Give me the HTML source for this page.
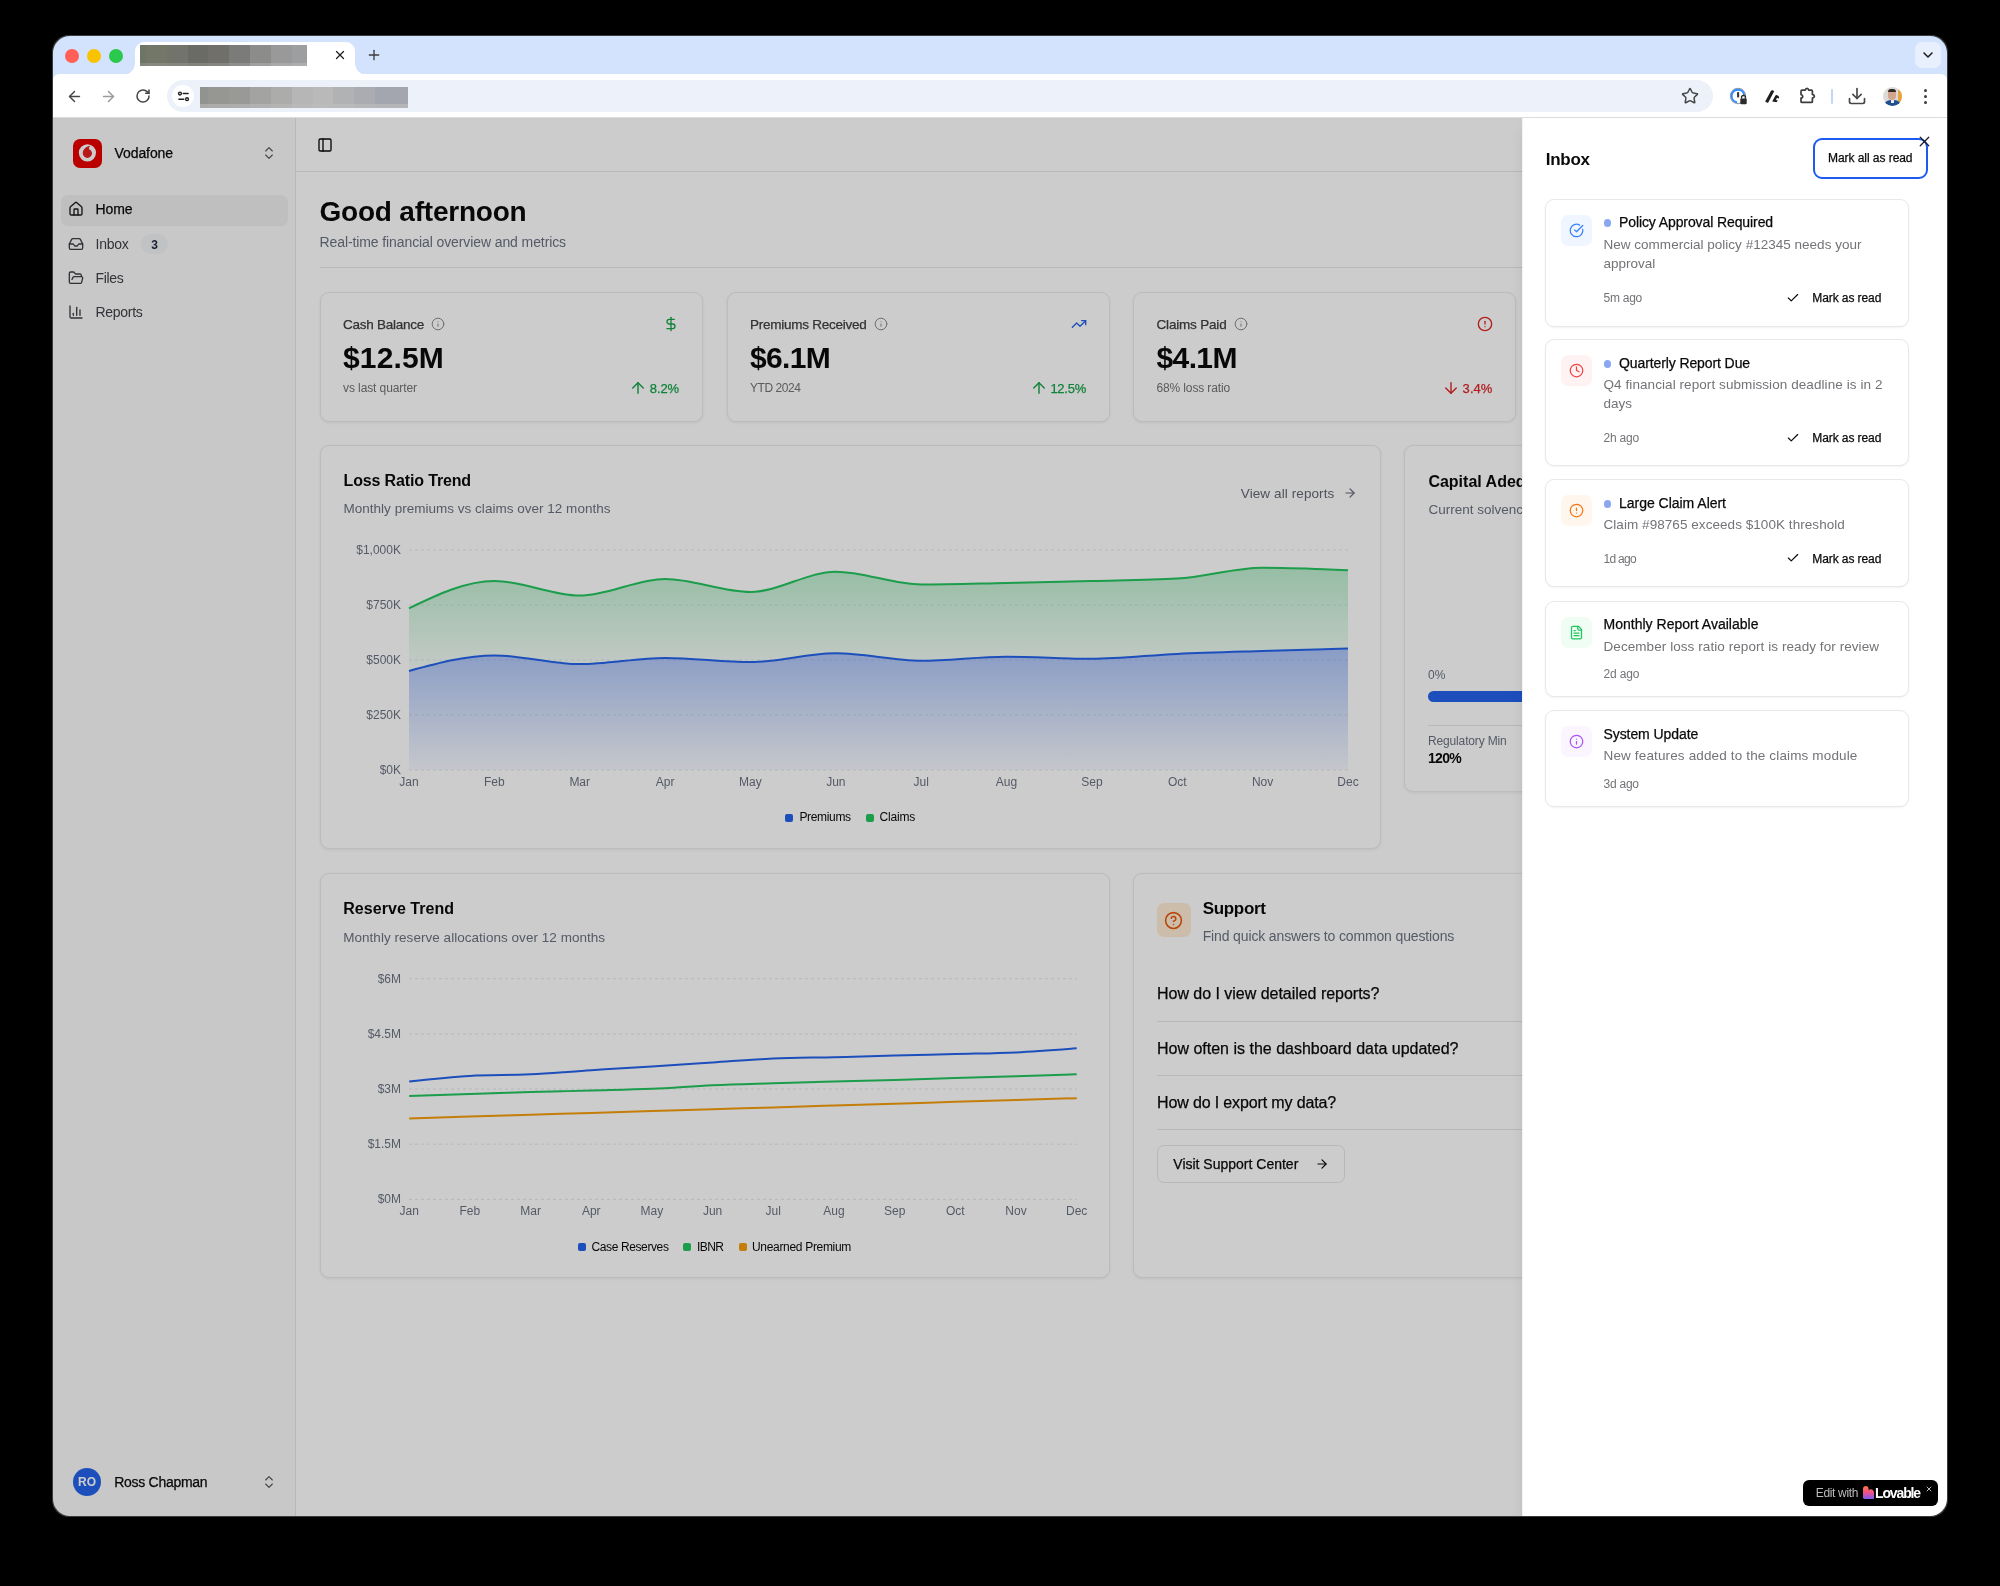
<!DOCTYPE html>
<html><head><meta charset="utf-8"><style>
html,body{margin:0;padding:0;background:#000;width:2000px;height:1586px;overflow:hidden;font-family:"Liberation Sans", sans-serif;}
.win{will-change:transform;}
</style></head><body>
<div style="position:absolute;left:52px;top:35px;width:1896px;height:1482px;border-radius:17px;background:#3a3a3a"></div>
<div class="win" style="position:absolute;left:0;top:0;width:2000px;height:1586px;overflow:hidden;clip-path:inset(36px 53px 70px 53px round 17px);background:#fff">
<div style="position:absolute;left:53px;top:36px;width:1894px;height:38px;background:#d3e3fd;border-radius:0px;"></div><svg style="position:absolute;left:123px;top:41.5px" width="245" height="33" viewBox="0 0 245 33"><path d="M0 33 A 12 12 0 0 0 12 21 L 12 9 A 9 9 0 0 1 21 0 L 223 0 A 9 9 0 0 1 232 9 L 232 21 A 12 12 0 0 0 244 33 Z" fill="#fff"/></svg><div style="position:absolute;left:139.50px;top:45.3px;width:6.18px;height:17.5px;background:#6c7566"></div><div style="position:absolute;left:139.50px;top:62.8px;width:6.18px;height:2.8px;background:#82857c"></div><div style="position:absolute;left:145.68px;top:45.3px;width:21.38px;height:17.5px;background:#737767"></div><div style="position:absolute;left:145.68px;top:62.8px;width:21.38px;height:2.8px;background:#878880"></div><div style="position:absolute;left:167.05px;top:45.3px;width:20.90px;height:17.5px;background:#72736a"></div><div style="position:absolute;left:167.05px;top:62.8px;width:20.90px;height:2.8px;background:#85867f"></div><div style="position:absolute;left:187.95px;top:45.3px;width:19.95px;height:17.5px;background:#6a6b64"></div><div style="position:absolute;left:187.95px;top:62.8px;width:19.95px;height:2.8px;background:#83837d"></div><div style="position:absolute;left:207.90px;top:45.3px;width:20.90px;height:17.5px;background:#706f69"></div><div style="position:absolute;left:207.90px;top:62.8px;width:20.90px;height:2.8px;background:#868581"></div><div style="position:absolute;left:228.80px;top:45.3px;width:21.09px;height:17.5px;background:#7b7b79"></div><div style="position:absolute;left:228.80px;top:62.8px;width:21.09px;height:2.8px;background:#8e8e8c"></div><div style="position:absolute;left:249.89px;top:45.3px;width:21.19px;height:17.5px;background:#8c8c8b"></div><div style="position:absolute;left:249.89px;top:62.8px;width:21.19px;height:2.8px;background:#a0a09f"></div><div style="position:absolute;left:271.07px;top:45.3px;width:20.90px;height:17.5px;background:#989998"></div><div style="position:absolute;left:271.07px;top:62.8px;width:20.90px;height:2.8px;background:#a9a9a8"></div><div style="position:absolute;left:291.98px;top:45.3px;width:15.20px;height:17.5px;background:#9d9e9f"></div><div style="position:absolute;left:291.98px;top:62.8px;width:15.20px;height:2.8px;background:#adaeaf"></div><svg style="position:absolute;left:332.5px;top:48.0px;" width="14" height="14" viewBox="0 0 24 24" fill="none" stroke="#1f1f1f" stroke-width="2.2" stroke-linecap="round" stroke-linejoin="round"><path d="M18 6 6 18"/><path d="m6 6 12 12"/></svg><svg style="position:absolute;left:366.0px;top:47.0px;" width="16" height="16" viewBox="0 0 24 24" fill="none" stroke="#3c3c3c" stroke-width="2" stroke-linecap="round" stroke-linejoin="round"><path d="M5 12h14"/><path d="M12 5v14"/></svg><div style="position:absolute;left:65px;top:48.5px;width:14px;height:14px;background:#ff5f57;border-radius:7px;"></div><div style="position:absolute;left:87px;top:48.5px;width:14px;height:14px;background:#f9c300;border-radius:7px;"></div><div style="position:absolute;left:109px;top:48.5px;width:14px;height:14px;background:#2ac84c;border-radius:7px;"></div><div style="position:absolute;left:1915px;top:42px;width:26px;height:26px;background:#e8f0fe;border-radius:7px;"></div><svg style="position:absolute;left:1919.5px;top:47.0px;" width="16" height="16" viewBox="0 0 24 24" fill="none" stroke="#1f1f1f" stroke-width="2.4" stroke-linecap="round" stroke-linejoin="round"><path d="m6 9 6 6 6-6"/></svg><div style="position:absolute;left:53px;top:74px;width:1894px;height:10px;background:#d3e3fd;border-radius:0px;"></div><div style="position:absolute;left:53px;top:74px;width:1894px;height:44px;background:#fff;border-radius:6px 6px 0 0"></div><div style="position:absolute;left:53px;top:117px;width:1894px;height:1px;background:#dadce0;border-radius:0px;"></div><svg style="position:absolute;left:65.8px;top:87.5px;" width="17" height="17" viewBox="0 0 24 24" fill="none" stroke="#474747" stroke-width="2.1" stroke-linecap="round" stroke-linejoin="round"><path d="m12 19-7-7 7-7"/><path d="M19 12H5"/></svg><svg style="position:absolute;left:99.7px;top:87.5px;" width="17" height="17" viewBox="0 0 24 24" fill="none" stroke="#9a9a9a" stroke-width="2.1" stroke-linecap="round" stroke-linejoin="round"><path d="M5 12h14"/><path d="m12 5 7 7-7 7"/></svg><svg style="position:absolute;left:134.5px;top:88.3px;" width="16" height="16" viewBox="0 0 24 24" fill="none" stroke="#474747" stroke-width="2.3" stroke-linecap="round" stroke-linejoin="round"><path d="M21 12a9 9 0 1 1-9-9c2.52 0 4.93 1 6.74 2.74L21 8"/><path d="M21 3v5h-5"/></svg><div style="position:absolute;left:167px;top:80px;width:1546px;height:32px;background:#edf2fa;border-radius:16px;"></div><div style="position:absolute;left:172px;top:85px;width:22px;height:22px;background:#fff;border-radius:11px;"></div><svg style="position:absolute;left:176.5px;top:89.5px;" width="13" height="13" viewBox="0 0 24 24" fill="none" stroke="#1f1f1f" stroke-width="2.6" stroke-linecap="round" stroke-linejoin="round"><circle cx="5.5" cy="6.5" r="2.6"/><path d="M11.5 6.5h9"/><circle cx="18.5" cy="17" r="2.6"/><path d="M3.5 17h9"/></svg><div style="position:absolute;left:200px;top:87px;width:8px;height:17px;background:#929290"></div><div style="position:absolute;left:200px;top:104px;width:8px;height:4px;background:#a9a9a7"></div><div style="position:absolute;left:208px;top:87px;width:21px;height:17px;background:#969693"></div><div style="position:absolute;left:208px;top:104px;width:21px;height:4px;background:#acacaa"></div><div style="position:absolute;left:229px;top:87px;width:21px;height:17px;background:#999997"></div><div style="position:absolute;left:229px;top:104px;width:21px;height:4px;background:#adadab"></div><div style="position:absolute;left:250px;top:87px;width:21px;height:17px;background:#a3a3a2"></div><div style="position:absolute;left:250px;top:104px;width:21px;height:4px;background:#b0b1b0"></div><div style="position:absolute;left:271px;top:87px;width:21px;height:17px;background:#acacab"></div><div style="position:absolute;left:271px;top:104px;width:21px;height:4px;background:#b4b4b3"></div><div style="position:absolute;left:292px;top:87px;width:21px;height:17px;background:#b6b6b7"></div><div style="position:absolute;left:292px;top:104px;width:21px;height:4px;background:#b9b9b9"></div><div style="position:absolute;left:313px;top:87px;width:20px;height:17px;background:#b9b9b9"></div><div style="position:absolute;left:313px;top:104px;width:20px;height:4px;background:#bbbbbb"></div><div style="position:absolute;left:333px;top:87px;width:21px;height:17px;background:#b0b2b4"></div><div style="position:absolute;left:333px;top:104px;width:21px;height:4px;background:#b9babb"></div><div style="position:absolute;left:354px;top:87px;width:21px;height:17px;background:#aaacb1"></div><div style="position:absolute;left:354px;top:104px;width:21px;height:4px;background:#b6b7b9"></div><div style="position:absolute;left:375px;top:87px;width:33px;height:17px;background:#a3a6ae"></div><div style="position:absolute;left:375px;top:104px;width:33px;height:4px;background:#b3b5b8"></div><svg style="position:absolute;left:1681.0px;top:87.0px;" width="18" height="18" viewBox="0 0 24 24" fill="none" stroke="#474747" stroke-width="2" stroke-linecap="round" stroke-linejoin="round"><path d="M11.525 2.295a.53.53 0 0 1 .95 0l2.31 4.679a2.123 2.123 0 0 0 1.595 1.16l5.166.756a.53.53 0 0 1 .294.904l-3.736 3.638a2.123 2.123 0 0 0-.611 1.878l.882 5.14a.53.53 0 0 1-.771.56l-4.618-2.428a2.122 2.122 0 0 0-1.973 0L6.396 21.01a.53.53 0 0 1-.77-.56l.881-5.139a2.122 2.122 0 0 0-.611-1.879L2.16 9.795a.53.53 0 0 1 .294-.906l5.165-.755a2.122 2.122 0 0 0 1.597-1.16z"/></svg><svg style="position:absolute;left:1728px;top:86px" width="20" height="20" viewBox="0 0 20 20"><circle cx="10" cy="10" r="7.6" fill="none" stroke="#9aa0a6" stroke-width="1.2"/><path d="M9 16.2 A6.3 6.3 0 1 1 16.2 9" fill="none" stroke="#2f8cff" stroke-width="2"/><rect x="9" y="6" width="2.2" height="5.5" rx="0.8" fill="#3c3c3c"/><rect x="12.3" y="12.6" width="6.4" height="5.6" rx="1" fill="#2b2b2b"/><path d="M13.5 12.8 v-1.3 a2 2 0 0 1 4 0 V12.8" fill="none" stroke="#2b2b2b" stroke-width="1.3"/></svg><svg style="position:absolute;left:1763px;top:87px" width="20" height="18" viewBox="0 0 20 18"><path d="M2.2 14.6 L7.6 4.4 Q8.6 2.8 10.2 3.6 L11.2 4.2 L5.4 15.2 Q4.8 16 3.8 15.6 Z" fill="#1f1f1f"/><path d="M9.2 14.6 L12.4 8.6 Q13.2 7.6 14.3 8.3 L15.6 9.2 Q16.6 10 15.9 11.2 L14.2 14.4 Q13.6 15.4 12.4 15.1 Z" fill="#1f1f1f"/><circle cx="14.6" cy="12.2" r="1.3" fill="#fff"/></svg><svg style="position:absolute;left:1797px;top:86px" width="20" height="20" viewBox="0 0 20 20"><path d="M4 5.2 Q4 4.2 5 4.2 H8.3 Q8.6 2.4 10 2.4 Q11.4 2.4 11.7 4.2 H14.4 Q15.4 4.2 15.4 5.2 V8.4 Q17.4 8.8 17.4 10.2 Q17.4 11.6 15.4 12 V15.4 Q15.4 16.4 14.4 16.4 H5 Q4 16.4 4 15.4 V12.2 Q5.8 11.8 5.8 10.4 Q5.8 9 4 8.6 Z" fill="none" stroke="#3c3c3c" stroke-width="1.7" stroke-linejoin="round"/></svg><div style="position:absolute;left:1831px;top:89px;width:2px;height:15px;background:#c2d7f7;border-radius:1px;"></div><svg style="position:absolute;left:1847.0px;top:86.0px;" width="20" height="20" viewBox="0 0 24 24" fill="none" stroke="#474747" stroke-width="2" stroke-linecap="round" stroke-linejoin="round"><path d="M21 15v4a2 2 0 0 1-2 2H5a2 2 0 0 1-2-2v-4"/><path d="M7 10l5 5 5-5"/><path d="M12 15V3"/></svg><div style="position:absolute;left:1882.5px;top:86.5px;width:19px;height:19px;border-radius:10px;overflow:hidden;background:#dcdad6"><div style="position:absolute;left:15px;top:3px;width:5px;height:12px;background:#e8a33c"></div><div style="position:absolute;left:5.5px;top:3px;width:8px;height:10px;border-radius:4px 4px 5px 5px;background:#d2a58c"></div><div style="position:absolute;left:5.5px;top:2px;width:8px;height:3.5px;border-radius:3px 3px 0 0;background:#2f2a26"></div><div style="position:absolute;left:0px;top:13px;width:19px;height:8px;border-radius:8px 8px 0 0;background:#1f4f8f"></div><div style="position:absolute;left:8px;top:13px;width:3px;height:3px;background:#e9eef5"></div></div><div style="position:absolute;left:1924.3px;top:88.5px;width:3px;height:3px;background:#3c3c3c;border-radius:1.5px;"></div><div style="position:absolute;left:1924.3px;top:94.5px;width:3px;height:3px;background:#3c3c3c;border-radius:1.5px;"></div><div style="position:absolute;left:1924.3px;top:100.5px;width:3px;height:3px;background:#3c3c3c;border-radius:1.5px;"></div><div style="position:absolute;left:53px;top:118px;width:1894px;height:1398px;background:#ffffff;border-radius:0px;"></div><div style="position:absolute;left:53px;top:118px;width:243px;height:1398px;background:#fafafa;border-radius:0px;"></div><div style="position:absolute;left:295px;top:118px;width:1px;height:1398px;background:#e5e7eb;border-radius:0px;"></div><div style="position:absolute;left:73px;top:138.5px;width:29px;height:29px;background:#ea0000;border-radius:7px;"></div><svg style="position:absolute;left:73px;top:139px" width="29" height="28" viewBox="0 0 29 28"><circle cx="14.4" cy="13.8" r="8.6" fill="#fff"/><path d="M17.3 6.8 C14.2 7.2 9.8 9.6 9.8 14.3 C9.8 16.8 11.9 18.9 14.4 18.9 C16.9 18.9 19 16.8 19 14.3 C19 12.2 17.6 10.6 15.9 10.2 C15.9 8.8 16.4 7.6 17.3 6.8 Z" fill="#e61e1e"/></svg><div style="position:absolute;left:114.50px;top:146.10px;font-size:14px;line-height:14px;font-weight:400;color:#0a0a0a;letter-spacing:-0.084px;white-space:pre;-webkit-text-stroke:0.25px #0a0a0a;">Vodafone</div><svg style="position:absolute;left:260.5px;top:144.5px;" width="16" height="16" viewBox="0 0 24 24" fill="none" stroke="#525252" stroke-width="1.6" stroke-linecap="round" stroke-linejoin="round"><path d="m7 15 5 5 5-5"/><path d="m7 9 5-5 5 5"/></svg><div style="position:absolute;left:61px;top:195px;width:227px;height:31px;background:#efefef;border-radius:7px;"></div><svg style="position:absolute;left:68.0px;top:201.1px;" width="16" height="16" viewBox="0 0 24 24" fill="none" stroke="#1a1a1a" stroke-width="2" stroke-linecap="round" stroke-linejoin="round"><path d="M15 21v-8a1 1 0 0 0-1-1h-4a1 1 0 0 0-1 1v8"/><path d="M3 10a2 2 0 0 1 .709-1.528l7-5.999a2 2 0 0 1 2.582 0l7 5.999A2 2 0 0 1 21 10v9a2 2 0 0 1-2 2H5a2 2 0 0 1-2-2z"/></svg><div style="position:absolute;left:95.50px;top:202.40px;font-size:14px;line-height:14px;font-weight:400;color:#0a0a0a;letter-spacing:-0.090px;white-space:pre;-webkit-text-stroke:0.25px #0a0a0a;">Home</div><svg style="position:absolute;left:68.0px;top:235.6px;" width="16" height="16" viewBox="0 0 24 24" fill="none" stroke="#3f3f46" stroke-width="2" stroke-linecap="round" stroke-linejoin="round"><polyline points="22 12 16 12 14 15 10 15 8 12 2 12"/><path d="M5.45 5.11 2 12v6a2 2 0 0 0 2 2h16a2 2 0 0 0 2-2v-6l-3.45-6.89A2 2 0 0 0 16.76 4H7.24a2 2 0 0 0-1.79 1.11z"/></svg><div style="position:absolute;left:95.50px;top:236.90px;font-size:14px;line-height:14px;font-weight:400;color:#3f3f46;letter-spacing:-0.250px;white-space:pre;">Inbox</div><svg style="position:absolute;left:68.0px;top:269.6px;" width="16" height="16" viewBox="0 0 24 24" fill="none" stroke="#3f3f46" stroke-width="2" stroke-linecap="round" stroke-linejoin="round"><path d="m6 14 1.5-2.9A2 2 0 0 1 9.24 10H20a2 2 0 0 1 1.94 2.5l-1.54 6a2 2 0 0 1-1.95 1.5H4a2 2 0 0 1-2-2V5a2 2 0 0 1 2-2h3.9a2 2 0 0 1 1.69.9l.81 1.2a2 2 0 0 0 1.67.9H18a2 2 0 0 1 2 2v2"/></svg><div style="position:absolute;left:95.50px;top:270.90px;font-size:14px;line-height:14px;font-weight:400;color:#3f3f46;letter-spacing:-0.312px;white-space:pre;">Files</div><svg style="position:absolute;left:68.0px;top:303.6px;" width="16" height="16" viewBox="0 0 24 24" fill="none" stroke="#3f3f46" stroke-width="2" stroke-linecap="round" stroke-linejoin="round"><path d="M3 3v16a2 2 0 0 0 2 2h16"/><path d="M18 17V9"/><path d="M13 17V5"/><path d="M8 17v-3"/></svg><div style="position:absolute;left:95.50px;top:304.90px;font-size:14px;line-height:14px;font-weight:400;color:#3f3f46;letter-spacing:-0.290px;white-space:pre;">Reports</div><div style="position:absolute;left:141px;top:234px;width:27px;height:20px;background:#f1f3f6;border-radius:10px;"></div><div style="position:absolute;left:151.16px;top:238.80px;font-size:12px;line-height:12px;font-weight:700;color:#1e293b;letter-spacing:0.000px;white-space:pre;">3</div><div style="position:absolute;left:73px;top:1467.5px;width:28px;height:28px;background:#2563eb;border-radius:14px;"></div><div style="position:absolute;left:78.00px;top:1475.80px;font-size:12px;line-height:12px;font-weight:700;color:#fff;letter-spacing:0.000px;white-space:pre;">RO</div><div style="position:absolute;left:114.25px;top:1474.60px;font-size:14px;line-height:14px;font-weight:400;color:#0a0a0a;letter-spacing:-0.292px;white-space:pre;-webkit-text-stroke:0.25px #0a0a0a;">Ross Chapman</div><svg style="position:absolute;left:260.5px;top:1473.5px;" width="16" height="16" viewBox="0 0 24 24" fill="none" stroke="#525252" stroke-width="1.6" stroke-linecap="round" stroke-linejoin="round"><path d="m7 15 5 5 5-5"/><path d="m7 9 5-5 5 5"/></svg><div style="position:absolute;left:296px;top:171px;width:1651px;height:1px;background:#e5e7eb;border-radius:0px;"></div><svg style="position:absolute;left:316.5px;top:136.5px;" width="16" height="16" viewBox="0 0 24 24" fill="none" stroke="#0a0a0a" stroke-width="2" stroke-linecap="round" stroke-linejoin="round"><rect width="18" height="18" x="3" y="3" rx="2"/><path d="M9 3v18"/></svg><div style="position:absolute;left:319.50px;top:198.20px;font-size:28px;line-height:28px;font-weight:700;color:#0a0a0a;letter-spacing:-0.213px;white-space:pre;">Good afternoon</div><div style="position:absolute;left:319.50px;top:234.80px;font-size:14px;line-height:14px;font-weight:400;color:#6b7280;letter-spacing:-0.101px;white-space:pre;">Real-time financial overview and metrics</div><div style="position:absolute;left:319.5px;top:267px;width:1603px;height:1px;background:#e5e7eb;border-radius:0px;"></div><div style="position:absolute;left:319.5px;top:291.5px;width:383px;height:130px;background:#fff;border-radius:9px;border:1px solid #ebebeb;box-sizing:border-box;box-shadow:0 1px 3px rgba(0,0,0,0.07);"></div><div style="position:absolute;left:343.00px;top:317.52px;font-size:13.5px;line-height:13.5px;font-weight:400;color:#404040;letter-spacing:-0.255px;white-space:pre;-webkit-text-stroke:0.25px #404040;">Cash Balance</div><svg style="position:absolute;left:431.3px;top:317.0px;" width="14" height="14" viewBox="0 0 24 24" fill="none" stroke="#8a8a8a" stroke-width="1.7" stroke-linecap="round" stroke-linejoin="round"><circle cx="12" cy="12" r="10"/><path d="M12 16v-4"/><path d="M12 8h.01"/></svg><div style="position:absolute;left:343.00px;top:342.50px;font-size:30px;line-height:30px;font-weight:700;color:#0a0a0a;letter-spacing:0.154px;white-space:pre;">$12.5M</div><div style="position:absolute;left:343.00px;top:382.30px;font-size:12px;line-height:12px;font-weight:400;color:#737373;letter-spacing:-0.092px;white-space:pre;">vs last quarter</div><div style="position:absolute;left:649.80px;top:381.95px;font-size:13px;line-height:13px;font-weight:400;color:#16a34a;letter-spacing:-0.110px;white-space:pre;-webkit-text-stroke:0.25px #16a34a;">8.2%</div><svg style="position:absolute;left:629.1999999999999px;top:379.3px;" width="18" height="18" viewBox="0 0 24 24" fill="none" stroke="#16a34a" stroke-width="1.9" stroke-linecap="round" stroke-linejoin="round"><path d="m5 12 7-7 7 7"/><path d="M12 19V5"/></svg><svg style="position:absolute;left:663.3px;top:316.0px;" width="16" height="16" viewBox="0 0 24 24" fill="none" stroke="#16a34a" stroke-width="2" stroke-linecap="round" stroke-linejoin="round"><line x1="12" x2="12" y1="2" y2="22"/><path d="M17 5H9.5a3.5 3.5 0 0 0 0 7h5a3.5 3.5 0 0 1 0 7H6"/></svg><div style="position:absolute;left:726.5px;top:291.5px;width:383px;height:130px;background:#fff;border-radius:9px;border:1px solid #ebebeb;box-sizing:border-box;box-shadow:0 1px 3px rgba(0,0,0,0.07);"></div><div style="position:absolute;left:750.00px;top:317.52px;font-size:13.5px;line-height:13.5px;font-weight:400;color:#404040;letter-spacing:-0.253px;white-space:pre;-webkit-text-stroke:0.25px #404040;">Premiums Received</div><svg style="position:absolute;left:873.6px;top:317.0px;" width="14" height="14" viewBox="0 0 24 24" fill="none" stroke="#8a8a8a" stroke-width="1.7" stroke-linecap="round" stroke-linejoin="round"><circle cx="12" cy="12" r="10"/><path d="M12 16v-4"/><path d="M12 8h.01"/></svg><div style="position:absolute;left:750.00px;top:342.50px;font-size:30px;line-height:30px;font-weight:700;color:#0a0a0a;letter-spacing:-0.678px;white-space:pre;">$6.1M</div><div style="position:absolute;left:750.00px;top:382.30px;font-size:12px;line-height:12px;font-weight:400;color:#737373;letter-spacing:-0.441px;white-space:pre;">YTD 2024</div><div style="position:absolute;left:1050.40px;top:381.95px;font-size:13px;line-height:13px;font-weight:400;color:#16a34a;letter-spacing:-0.255px;white-space:pre;-webkit-text-stroke:0.25px #16a34a;">12.5%</div><svg style="position:absolute;left:1029.8000000000002px;top:379.3px;" width="18" height="18" viewBox="0 0 24 24" fill="none" stroke="#16a34a" stroke-width="1.9" stroke-linecap="round" stroke-linejoin="round"><path d="m5 12 7-7 7 7"/><path d="M12 19V5"/></svg><svg style="position:absolute;left:1070.5px;top:316.0px;" width="16" height="16" viewBox="0 0 24 24" fill="none" stroke="#2563eb" stroke-width="2" stroke-linecap="round" stroke-linejoin="round"><polyline points="22 7 13.5 15.5 8.5 10.5 2 17"/><polyline points="16 7 22 7 22 13"/></svg><div style="position:absolute;left:1133px;top:291.5px;width:383px;height:130px;background:#fff;border-radius:9px;border:1px solid #ebebeb;box-sizing:border-box;box-shadow:0 1px 3px rgba(0,0,0,0.07);"></div><div style="position:absolute;left:1156.50px;top:317.52px;font-size:13.5px;line-height:13.5px;font-weight:400;color:#404040;letter-spacing:-0.185px;white-space:pre;-webkit-text-stroke:0.25px #404040;">Claims Paid</div><svg style="position:absolute;left:1233.8px;top:317.0px;" width="14" height="14" viewBox="0 0 24 24" fill="none" stroke="#8a8a8a" stroke-width="1.7" stroke-linecap="round" stroke-linejoin="round"><circle cx="12" cy="12" r="10"/><path d="M12 16v-4"/><path d="M12 8h.01"/></svg><div style="position:absolute;left:1156.50px;top:342.50px;font-size:30px;line-height:30px;font-weight:700;color:#0a0a0a;letter-spacing:-0.618px;white-space:pre;">$4.1M</div><div style="position:absolute;left:1156.50px;top:382.30px;font-size:12px;line-height:12px;font-weight:400;color:#737373;letter-spacing:-0.134px;white-space:pre;">68% loss ratio</div><div style="position:absolute;left:1462.60px;top:381.95px;font-size:13px;line-height:13px;font-weight:400;color:#dc2626;letter-spacing:0.065px;white-space:pre;-webkit-text-stroke:0.25px #dc2626;">3.4%</div><svg style="position:absolute;left:1442.0px;top:379.3px;" width="18" height="18" viewBox="0 0 24 24" fill="none" stroke="#dc2626" stroke-width="1.9" stroke-linecap="round" stroke-linejoin="round"><path d="M12 5v14"/><path d="m19 12-7 7-7-7"/></svg><svg style="position:absolute;left:1477.0px;top:316.0px;" width="16" height="16" viewBox="0 0 24 24" fill="none" stroke="#dc2626" stroke-width="2" stroke-linecap="round" stroke-linejoin="round"><circle cx="12" cy="12" r="10"/><line x1="12" x2="12" y1="8" y2="12"/><line x1="12" x2="12.01" y1="16" y2="16"/></svg><div style="position:absolute;left:1540px;top:291.5px;width:383px;height:130px;background:#fff;border-radius:9px;border:1px solid #ebebeb;box-sizing:border-box;box-shadow:0 1px 3px rgba(0,0,0,0.07);"></div><div style="position:absolute;left:1563.50px;top:317.52px;font-size:13.5px;line-height:13.5px;font-weight:400;color:#404040;letter-spacing:0.620px;white-space:pre;-webkit-text-stroke:0.25px #404040;">Loss Ratio</div><svg style="position:absolute;left:1633.0px;top:317.0px;" width="14" height="14" viewBox="0 0 24 24" fill="none" stroke="#8a8a8a" stroke-width="1.7" stroke-linecap="round" stroke-linejoin="round"><circle cx="12" cy="12" r="10"/><path d="M12 16v-4"/><path d="M12 8h.01"/></svg><div style="position:absolute;left:1563.50px;top:342.50px;font-size:30px;line-height:30px;font-weight:700;color:#0a0a0a;letter-spacing:0.984px;white-space:pre;">68.2%</div><div style="position:absolute;left:1563.50px;top:382.30px;font-size:12px;line-height:12px;font-weight:400;color:#737373;letter-spacing:0.541px;white-space:pre;">Target: 65%</div><div style="position:absolute;left:1870.50px;top:381.95px;font-size:13px;line-height:13px;font-weight:400;color:#dc2626;letter-spacing:-0.160px;white-space:pre;-webkit-text-stroke:0.25px #dc2626;">2.1%</div><svg style="position:absolute;left:1849.9px;top:379.3px;" width="18" height="18" viewBox="0 0 24 24" fill="none" stroke="#dc2626" stroke-width="1.9" stroke-linecap="round" stroke-linejoin="round"><path d="M12 5v14"/><path d="m19 12-7 7-7-7"/></svg><svg style="position:absolute;left:1884.0px;top:316.0px;" width="16" height="16" viewBox="0 0 24 24" fill="none" stroke="#dc2626" stroke-width="2" stroke-linecap="round" stroke-linejoin="round"><circle cx="12" cy="12" r="10"/><line x1="12" x2="12" y1="8" y2="12"/><line x1="12" x2="12.01" y1="16" y2="16"/></svg><div style="position:absolute;left:319.5px;top:445px;width:1061px;height:404px;background:#fff;border-radius:9px;border:1px solid #ebebeb;box-sizing:border-box;box-shadow:0 1px 3px rgba(0,0,0,0.07);"></div><div style="position:absolute;left:343.50px;top:473.40px;font-size:16px;line-height:16px;font-weight:700;color:#0a0a0a;letter-spacing:-0.144px;white-space:pre;">Loss Ratio Trend</div><div style="position:absolute;left:343.50px;top:501.52px;font-size:13.5px;line-height:13.5px;font-weight:400;color:#6b7280;letter-spacing:0.016px;white-space:pre;">Monthly premiums vs claims over 12 months</div><div style="position:absolute;left:1240.80px;top:486.52px;font-size:13.5px;line-height:13.5px;font-weight:400;color:#646872;letter-spacing:0.097px;white-space:pre;">View all reports</div><svg style="position:absolute;left:1343.0px;top:486.3px;" width="14" height="14" viewBox="0 0 24 24" fill="none" stroke="#646872" stroke-width="2" stroke-linecap="round" stroke-linejoin="round"><path d="M5 12h14"/><path d="m12 5 7 7-7 7"/></svg><svg style="position:absolute;left:0;top:0" width="2000" height="1586" viewBox="0 0 2000 1586"><defs><linearGradient id="gG" x1="0" y1="0" x2="0" y2="1"><stop offset="0%" stop-color="#22c55e" stop-opacity="0.30"/><stop offset="100%" stop-color="#22c55e" stop-opacity="0.04"/></linearGradient><linearGradient id="gB" x1="0" y1="0" x2="0" y2="1"><stop offset="0%" stop-color="#2563eb" stop-opacity="0.38"/><stop offset="100%" stop-color="#2563eb" stop-opacity="0.04"/></linearGradient></defs><line x1="409" y1="550" x2="1348" y2="550" stroke="#e5e7eb" stroke-width="1" stroke-dasharray="3 3"/><line x1="409" y1="605" x2="1348" y2="605" stroke="#e5e7eb" stroke-width="1" stroke-dasharray="3 3"/><line x1="409" y1="660" x2="1348" y2="660" stroke="#e5e7eb" stroke-width="1" stroke-dasharray="3 3"/><line x1="409" y1="715" x2="1348" y2="715" stroke="#e5e7eb" stroke-width="1" stroke-dasharray="3 3"/><line x1="409" y1="770" x2="1348" y2="770" stroke="#e5e7eb" stroke-width="1" stroke-dasharray="3 3"/><path d="M409.00,608.30C437.45,594.65 465.91,581.00 494.36,581.00C522.82,581.00 551.27,595.60 579.73,595.60C608.18,595.60 636.64,578.90 665.09,578.90C693.55,578.90 722.00,591.90 750.45,591.90C778.91,591.90 807.36,571.70 835.82,571.70C864.27,571.70 892.73,584.50 921.18,584.50C949.64,584.50 978.09,583.48 1006.55,582.90C1035.00,582.32 1063.45,581.72 1091.91,581.00C1120.36,580.28 1148.82,580.20 1177.27,578.60C1205.73,577.00 1234.18,567.70 1262.64,567.70C1291.09,567.70 1319.55,568.95 1348.00,570.20 L1348.00,648.60C1319.55,649.36 1291.09,650.12 1262.64,651.00C1234.18,651.88 1205.73,652.60 1177.27,653.90C1148.82,655.20 1120.36,658.80 1091.91,658.80C1063.45,658.80 1035.00,656.70 1006.55,656.70C978.09,656.70 949.64,660.70 921.18,660.70C892.73,660.70 864.27,653.30 835.82,653.30C807.36,653.30 778.91,662.00 750.45,662.00C722.00,662.00 693.55,657.90 665.09,657.90C636.64,657.90 608.18,664.10 579.73,664.10C551.27,664.10 522.82,655.40 494.36,655.40C465.91,655.40 437.45,663.20 409.00,671.00 Z" fill="url(#gG)"/><path d="M409.00,671.00C437.45,663.20 465.91,655.40 494.36,655.40C522.82,655.40 551.27,664.10 579.73,664.10C608.18,664.10 636.64,657.90 665.09,657.90C693.55,657.90 722.00,662.00 750.45,662.00C778.91,662.00 807.36,653.30 835.82,653.30C864.27,653.30 892.73,660.70 921.18,660.70C949.64,660.70 978.09,656.70 1006.55,656.70C1035.00,656.70 1063.45,658.80 1091.91,658.80C1120.36,658.80 1148.82,655.20 1177.27,653.90C1205.73,652.60 1234.18,651.88 1262.64,651.00C1291.09,650.12 1319.55,649.36 1348.00,648.60 L1348,770 L409,770 Z" fill="url(#gB)"/><path d="M409.00,608.30C437.45,594.65 465.91,581.00 494.36,581.00C522.82,581.00 551.27,595.60 579.73,595.60C608.18,595.60 636.64,578.90 665.09,578.90C693.55,578.90 722.00,591.90 750.45,591.90C778.91,591.90 807.36,571.70 835.82,571.70C864.27,571.70 892.73,584.50 921.18,584.50C949.64,584.50 978.09,583.48 1006.55,582.90C1035.00,582.32 1063.45,581.72 1091.91,581.00C1120.36,580.28 1148.82,580.20 1177.27,578.60C1205.73,577.00 1234.18,567.70 1262.64,567.70C1291.09,567.70 1319.55,568.95 1348.00,570.20" fill="none" stroke="#22c55e" stroke-width="2"/><path d="M409.00,671.00C437.45,663.20 465.91,655.40 494.36,655.40C522.82,655.40 551.27,664.10 579.73,664.10C608.18,664.10 636.64,657.90 665.09,657.90C693.55,657.90 722.00,662.00 750.45,662.00C778.91,662.00 807.36,653.30 835.82,653.30C864.27,653.30 892.73,660.70 921.18,660.70C949.64,660.70 978.09,656.70 1006.55,656.70C1035.00,656.70 1063.45,658.80 1091.91,658.80C1120.36,658.80 1148.82,655.20 1177.27,653.90C1205.73,652.60 1234.18,651.88 1262.64,651.00C1291.09,650.12 1319.55,649.36 1348.00,648.60" fill="none" stroke="#2563eb" stroke-width="2"/></svg><div style="position:absolute;left:356.28px;top:543.80px;font-size:12px;line-height:12px;font-weight:400;color:#6b7280;letter-spacing:0.000px;white-space:pre;">$1,000K</div><div style="position:absolute;left:366.30px;top:598.80px;font-size:12px;line-height:12px;font-weight:400;color:#6b7280;letter-spacing:0.000px;white-space:pre;">$750K</div><div style="position:absolute;left:366.30px;top:653.80px;font-size:12px;line-height:12px;font-weight:400;color:#6b7280;letter-spacing:0.000px;white-space:pre;">$500K</div><div style="position:absolute;left:366.30px;top:708.80px;font-size:12px;line-height:12px;font-weight:400;color:#6b7280;letter-spacing:0.000px;white-space:pre;">$250K</div><div style="position:absolute;left:379.64px;top:763.80px;font-size:12px;line-height:12px;font-weight:400;color:#6b7280;letter-spacing:0.000px;white-space:pre;">$0K</div><div style="position:absolute;left:399.32px;top:775.80px;font-size:12px;line-height:12px;font-weight:400;color:#6b7280;letter-spacing:0.000px;white-space:pre;">Jan</div><div style="position:absolute;left:484.02px;top:775.80px;font-size:12px;line-height:12px;font-weight:400;color:#6b7280;letter-spacing:0.000px;white-space:pre;">Feb</div><div style="position:absolute;left:569.39px;top:775.80px;font-size:12px;line-height:12px;font-weight:400;color:#6b7280;letter-spacing:0.000px;white-space:pre;">Mar</div><div style="position:absolute;left:655.75px;top:775.80px;font-size:12px;line-height:12px;font-weight:400;color:#6b7280;letter-spacing:0.000px;white-space:pre;">Apr</div><div style="position:absolute;left:739.12px;top:775.80px;font-size:12px;line-height:12px;font-weight:400;color:#6b7280;letter-spacing:0.000px;white-space:pre;">May</div><div style="position:absolute;left:826.14px;top:775.80px;font-size:12px;line-height:12px;font-weight:400;color:#6b7280;letter-spacing:0.000px;white-space:pre;">Jun</div><div style="position:absolute;left:913.51px;top:775.80px;font-size:12px;line-height:12px;font-weight:400;color:#6b7280;letter-spacing:0.000px;white-space:pre;">Jul</div><div style="position:absolute;left:995.87px;top:775.80px;font-size:12px;line-height:12px;font-weight:400;color:#6b7280;letter-spacing:0.000px;white-space:pre;">Aug</div><div style="position:absolute;left:1081.23px;top:775.80px;font-size:12px;line-height:12px;font-weight:400;color:#6b7280;letter-spacing:0.000px;white-space:pre;">Sep</div><div style="position:absolute;left:1167.94px;top:775.80px;font-size:12px;line-height:12px;font-weight:400;color:#6b7280;letter-spacing:0.000px;white-space:pre;">Oct</div><div style="position:absolute;left:1251.96px;top:775.80px;font-size:12px;line-height:12px;font-weight:400;color:#6b7280;letter-spacing:0.000px;white-space:pre;">Nov</div><div style="position:absolute;left:1337.33px;top:775.80px;font-size:12px;line-height:12px;font-weight:400;color:#6b7280;letter-spacing:0.000px;white-space:pre;">Dec</div><div style="position:absolute;left:785.2px;top:813.8px;width:8px;height:8px;background:#2563eb;border-radius:2px;"></div><div style="position:absolute;left:799.40px;top:811.20px;font-size:12px;line-height:12px;font-weight:400;color:#0a0a0a;letter-spacing:-0.327px;white-space:pre;">Premiums</div><div style="position:absolute;left:866px;top:813.8px;width:8px;height:8px;background:#22c55e;border-radius:2px;"></div><div style="position:absolute;left:879.60px;top:811.20px;font-size:12px;line-height:12px;font-weight:400;color:#0a0a0a;letter-spacing:-0.212px;white-space:pre;">Claims</div><div style="position:absolute;left:1404px;top:445px;width:519px;height:346.5px;background:#fff;border-radius:9px;border:1px solid #ebebeb;box-sizing:border-box;box-shadow:0 1px 3px rgba(0,0,0,0.07);"></div><div style="position:absolute;left:1428.40px;top:473.80px;font-size:16px;line-height:16px;font-weight:700;color:#0a0a0a;letter-spacing:0.000px;white-space:pre;">Capital Adequacy</div><div style="position:absolute;left:1428.40px;top:502.52px;font-size:13.5px;line-height:13.5px;font-weight:400;color:#6b7280;letter-spacing:0.000px;white-space:pre;">Current solvency ratio</div><div style="position:absolute;left:1428.00px;top:669.40px;font-size:12px;line-height:12px;font-weight:400;color:#6b7280;letter-spacing:0.000px;white-space:pre;">0%</div><div style="position:absolute;left:1428px;top:690.5px;width:471px;height:11px;background:#2563eb;border-radius:6px;"></div><div style="position:absolute;left:1428px;top:724.5px;width:471px;height:1px;background:#e5e7eb;border-radius:0px;"></div><div style="position:absolute;left:1428.00px;top:735.10px;font-size:12px;line-height:12px;font-weight:400;color:#6b7280;letter-spacing:-0.150px;white-space:pre;">Regulatory Min</div><div style="position:absolute;left:1428.00px;top:751.10px;font-size:14px;line-height:14px;font-weight:700;color:#0a0a0a;letter-spacing:-0.703px;white-space:pre;">120%</div><div style="position:absolute;left:319.5px;top:872.5px;width:790px;height:405px;background:#fff;border-radius:9px;border:1px solid #ebebeb;box-sizing:border-box;box-shadow:0 1px 3px rgba(0,0,0,0.07);"></div><div style="position:absolute;left:343.20px;top:901.10px;font-size:16px;line-height:16px;font-weight:700;color:#0a0a0a;letter-spacing:0.055px;white-space:pre;">Reserve Trend</div><div style="position:absolute;left:343.20px;top:930.73px;font-size:13.5px;line-height:13.5px;font-weight:400;color:#6b7280;letter-spacing:0.038px;white-space:pre;">Monthly reserve allocations over 12 months</div><svg style="position:absolute;left:0;top:0" width="2000" height="1586" viewBox="0 0 2000 1586"><line x1="409" y1="978.7" x2="1077" y2="978.7" stroke="#e5e7eb" stroke-width="1" stroke-dasharray="3 3"/><line x1="409" y1="1033.9" x2="1077" y2="1033.9" stroke="#e5e7eb" stroke-width="1" stroke-dasharray="3 3"/><line x1="409" y1="1089.0" x2="1077" y2="1089.0" stroke="#e5e7eb" stroke-width="1" stroke-dasharray="3 3"/><line x1="409" y1="1144.2" x2="1077" y2="1144.2" stroke="#e5e7eb" stroke-width="1" stroke-dasharray="3 3"/><line x1="409" y1="1199.4" x2="1077" y2="1199.4" stroke="#e5e7eb" stroke-width="1" stroke-dasharray="3 3"/><path d="M409.20,1081.50C429.43,1079.23 449.65,1076.97 469.88,1075.90C490.11,1074.83 510.34,1075.25 530.56,1074.30C550.79,1073.35 571.02,1071.48 591.25,1070.20C611.47,1068.92 631.70,1067.88 651.93,1066.60C672.15,1065.32 692.38,1063.85 712.61,1062.50C732.84,1061.15 753.06,1059.37 773.29,1058.50C793.52,1057.63 813.75,1057.68 833.97,1057.20C854.20,1056.72 874.43,1056.13 894.65,1055.60C914.88,1055.07 935.11,1054.53 955.34,1054.00C975.56,1053.47 995.79,1053.35 1016.02,1052.40C1036.25,1051.45 1056.47,1049.88 1076.70,1048.30" fill="none" stroke="#2563eb" stroke-width="2"/><path d="M409.20,1096.10C429.43,1095.43 449.65,1094.77 469.88,1094.10C490.11,1093.43 510.34,1092.70 530.56,1092.10C550.79,1091.50 571.02,1091.05 591.25,1090.50C611.47,1089.95 631.70,1089.68 651.93,1088.80C672.15,1087.92 692.38,1086.13 712.61,1085.20C732.84,1084.27 753.06,1083.82 773.29,1083.20C793.52,1082.58 813.75,1082.05 833.97,1081.50C854.20,1080.95 874.43,1080.50 894.65,1079.90C914.88,1079.30 935.11,1078.50 955.34,1077.90C975.56,1077.30 995.79,1076.90 1016.02,1076.30C1036.25,1075.70 1056.47,1075.00 1076.70,1074.30" fill="none" stroke="#22c55e" stroke-width="2"/><path d="M409.20,1118.40C429.43,1117.79 449.65,1117.18 469.88,1116.56C490.11,1115.95 510.34,1115.34 530.56,1114.73C550.79,1114.12 571.02,1113.50 591.25,1112.89C611.47,1112.28 631.70,1111.67 651.93,1111.05C672.15,1110.44 692.38,1109.83 712.61,1109.22C732.84,1108.61 753.06,1107.99 773.29,1107.38C793.52,1106.77 813.75,1106.16 833.97,1105.55C854.20,1104.93 874.43,1104.32 894.65,1103.71C914.88,1103.10 935.11,1102.48 955.34,1101.87C975.56,1101.26 995.79,1100.65 1016.02,1100.04C1036.25,1099.42 1056.47,1098.81 1076.70,1098.20" fill="none" stroke="#f59e0b" stroke-width="2"/></svg><div style="position:absolute;left:377.66px;top:972.50px;font-size:12px;line-height:12px;font-weight:400;color:#6b7280;letter-spacing:0.000px;white-space:pre;">$6M</div><div style="position:absolute;left:367.64px;top:1027.67px;font-size:12px;line-height:12px;font-weight:400;color:#6b7280;letter-spacing:0.000px;white-space:pre;">$4.5M</div><div style="position:absolute;left:377.66px;top:1082.84px;font-size:12px;line-height:12px;font-weight:400;color:#6b7280;letter-spacing:0.000px;white-space:pre;">$3M</div><div style="position:absolute;left:367.64px;top:1138.01px;font-size:12px;line-height:12px;font-weight:400;color:#6b7280;letter-spacing:0.000px;white-space:pre;">$1.5M</div><div style="position:absolute;left:377.66px;top:1193.18px;font-size:12px;line-height:12px;font-weight:400;color:#6b7280;letter-spacing:0.000px;white-space:pre;">$0M</div><div style="position:absolute;left:399.52px;top:1204.80px;font-size:12px;line-height:12px;font-weight:400;color:#6b7280;letter-spacing:0.000px;white-space:pre;">Jan</div><div style="position:absolute;left:459.54px;top:1204.80px;font-size:12px;line-height:12px;font-weight:400;color:#6b7280;letter-spacing:0.000px;white-space:pre;">Feb</div><div style="position:absolute;left:520.23px;top:1204.80px;font-size:12px;line-height:12px;font-weight:400;color:#6b7280;letter-spacing:0.000px;white-space:pre;">Mar</div><div style="position:absolute;left:581.90px;top:1204.80px;font-size:12px;line-height:12px;font-weight:400;color:#6b7280;letter-spacing:0.000px;white-space:pre;">Apr</div><div style="position:absolute;left:640.59px;top:1204.80px;font-size:12px;line-height:12px;font-weight:400;color:#6b7280;letter-spacing:0.000px;white-space:pre;">May</div><div style="position:absolute;left:702.93px;top:1204.80px;font-size:12px;line-height:12px;font-weight:400;color:#6b7280;letter-spacing:0.000px;white-space:pre;">Jun</div><div style="position:absolute;left:765.62px;top:1204.80px;font-size:12px;line-height:12px;font-weight:400;color:#6b7280;letter-spacing:0.000px;white-space:pre;">Jul</div><div style="position:absolute;left:823.29px;top:1204.80px;font-size:12px;line-height:12px;font-weight:400;color:#6b7280;letter-spacing:0.000px;white-space:pre;">Aug</div><div style="position:absolute;left:883.97px;top:1204.80px;font-size:12px;line-height:12px;font-weight:400;color:#6b7280;letter-spacing:0.000px;white-space:pre;">Sep</div><div style="position:absolute;left:946.00px;top:1204.80px;font-size:12px;line-height:12px;font-weight:400;color:#6b7280;letter-spacing:0.000px;white-space:pre;">Oct</div><div style="position:absolute;left:1005.35px;top:1204.80px;font-size:12px;line-height:12px;font-weight:400;color:#6b7280;letter-spacing:0.000px;white-space:pre;">Nov</div><div style="position:absolute;left:1066.03px;top:1204.80px;font-size:12px;line-height:12px;font-weight:400;color:#6b7280;letter-spacing:0.000px;white-space:pre;">Dec</div><div style="position:absolute;left:578px;top:1243px;width:8px;height:8px;background:#2563eb;border-radius:2px;"></div><div style="position:absolute;left:591.50px;top:1240.60px;font-size:12px;line-height:12px;font-weight:400;color:#0a0a0a;letter-spacing:-0.387px;white-space:pre;">Case Reserves</div><div style="position:absolute;left:683.4px;top:1243px;width:8px;height:8px;background:#22c55e;border-radius:2px;"></div><div style="position:absolute;left:697.00px;top:1240.60px;font-size:12px;line-height:12px;font-weight:400;color:#0a0a0a;letter-spacing:-0.543px;white-space:pre;">IBNR</div><div style="position:absolute;left:738.5px;top:1243px;width:8px;height:8px;background:#f59e0b;border-radius:2px;"></div><div style="position:absolute;left:752.00px;top:1240.60px;font-size:12px;line-height:12px;font-weight:400;color:#0a0a0a;letter-spacing:-0.315px;white-space:pre;">Unearned Premium</div><div style="position:absolute;left:1133.3px;top:872.5px;width:790px;height:405px;background:#fff;border-radius:9px;border:1px solid #ebebeb;box-sizing:border-box;box-shadow:0 1px 3px rgba(0,0,0,0.07);"></div><div style="position:absolute;left:1157px;top:903px;width:34px;height:34px;background:#ffedd5;border-radius:7px;"></div><svg style="position:absolute;left:1164.3px;top:910.5px;" width="19" height="19" viewBox="0 0 24 24" fill="none" stroke="#ea580c" stroke-width="2" stroke-linecap="round" stroke-linejoin="round"><circle cx="12" cy="12" r="10"/><path d="M9.09 9a3 3 0 0 1 5.83 1c0 2-3 3-3 3"/><path d="M12 17h.01"/></svg><div style="position:absolute;left:1202.70px;top:900.15px;font-size:17px;line-height:17px;font-weight:700;color:#0a0a0a;letter-spacing:-0.308px;white-space:pre;">Support</div><div style="position:absolute;left:1202.70px;top:928.50px;font-size:14px;line-height:14px;font-weight:400;color:#6b7280;letter-spacing:-0.139px;white-space:pre;">Find quick answers to common questions</div><div style="position:absolute;left:1157.00px;top:986.40px;font-size:16px;line-height:16px;font-weight:400;color:#0a0a0a;letter-spacing:-0.027px;white-space:pre;-webkit-text-stroke:0.25px #0a0a0a;">How do I view detailed reports?</div><div style="position:absolute;left:1157.00px;top:1040.60px;font-size:16px;line-height:16px;font-weight:400;color:#0a0a0a;letter-spacing:-0.002px;white-space:pre;-webkit-text-stroke:0.25px #0a0a0a;">How often is the dashboard data updated?</div><div style="position:absolute;left:1157.00px;top:1094.70px;font-size:16px;line-height:16px;font-weight:400;color:#0a0a0a;letter-spacing:-0.138px;white-space:pre;-webkit-text-stroke:0.25px #0a0a0a;">How do I export my data?</div><div style="position:absolute;left:1157px;top:1020.9px;width:742px;height:1px;background:#e5e7eb;border-radius:0px;"></div><div style="position:absolute;left:1157px;top:1075px;width:742px;height:1px;background:#e5e7eb;border-radius:0px;"></div><div style="position:absolute;left:1157px;top:1129px;width:742px;height:1px;background:#e5e7eb;border-radius:0px;"></div><div style="position:absolute;left:1157px;top:1145.2px;width:188px;height:37.4px;background:#fff;border-radius:7px;border:1px solid #e5e7eb;box-sizing:border-box;"></div><div style="position:absolute;left:1173.30px;top:1157.40px;font-size:14px;line-height:14px;font-weight:400;color:#0a0a0a;letter-spacing:-0.002px;white-space:pre;-webkit-text-stroke:0.25px #0a0a0a;">Visit Support Center</div><svg style="position:absolute;left:1315.0px;top:1157.0px;" width="14" height="14" viewBox="0 0 24 24" fill="none" stroke="#0a0a0a" stroke-width="2" stroke-linecap="round" stroke-linejoin="round"><path d="M5 12h14"/><path d="m12 5 7 7-7 7"/></svg><div style="position:absolute;left:53px;top:118px;width:1468.5px;height:1398px;background:rgba(0,0,0,0.2);border-radius:0px;"></div><div style="position:absolute;left:1521.5px;top:118px;width:425.5px;height:1398px;background:#fff;border-radius:0px;box-shadow:0 10px 15px -3px rgba(0,0,0,0.1), 0 4px 6px -4px rgba(0,0,0,0.1);border-left:1px solid #f2f2f2;box-sizing:border-box;"></div><div style="position:absolute;left:1545.75px;top:150.55px;font-size:17px;line-height:17px;font-weight:700;color:#0a0a0a;letter-spacing:-0.269px;white-space:pre;">Inbox</div><div style="position:absolute;left:1812.5px;top:137.5px;width:115.5px;height:41.5px;background:#fff;border-radius:9px;border:2px solid #1d5bf0;box-sizing:border-box;"></div><div style="position:absolute;left:1828.00px;top:152.30px;font-size:12px;line-height:12px;font-weight:400;color:#0a0a0a;letter-spacing:-0.055px;white-space:pre;-webkit-text-stroke:0.25px #0a0a0a;">Mark all as read</div><svg style="position:absolute;left:1915.5px;top:133.0px;" width="17" height="17" viewBox="0 0 24 24" fill="none" stroke="#1a1a2a" stroke-width="1.8" stroke-linecap="round" stroke-linejoin="round"><path d="M18 6 6 18"/><path d="m6 6 12 12"/></svg><div style="position:absolute;left:1545px;top:198.5px;width:364px;height:128.0px;background:#fff;border-radius:9px;border:1px solid #e8e8ea;box-sizing:border-box;box-shadow:0 1px 2px rgba(0,0,0,0.05);"></div><div style="position:absolute;left:1561px;top:214.5px;width:31px;height:31px;background:#eff6ff;border-radius:7px;"></div><svg style="position:absolute;left:1569.0px;top:222.5px;" width="15" height="15" viewBox="0 0 24 24" fill="none" stroke="#3b82f6" stroke-width="2" stroke-linecap="round" stroke-linejoin="round"><path d="M21.801 10A10 10 0 1 1 17 3.335"/><path d="m9 11 3 3L22 4"/></svg><div style="position:absolute;left:1603.5px;top:219px;width:7.5px;height:7.5px;background:#8aa8f2;border-radius:4px;"></div><div style="position:absolute;left:1619.00px;top:215.10px;font-size:14px;line-height:14px;font-weight:400;color:#0a0a0a;letter-spacing:-0.101px;white-space:pre;-webkit-text-stroke:0.25px #0a0a0a;">Policy Approval Required</div><div style="position:absolute;left:1603.50px;top:237.53px;font-size:13.5px;line-height:13.5px;font-weight:400;color:#737378;letter-spacing:0.016px;white-space:pre;">New commercial policy #12345 needs your</div><div style="position:absolute;left:1603.50px;top:256.52px;font-size:13.5px;line-height:13.5px;font-weight:400;color:#737378;letter-spacing:0.000px;white-space:pre;">approval</div><div style="position:absolute;left:1603.50px;top:291.80px;font-size:12px;line-height:12px;font-weight:400;color:#737378;letter-spacing:-0.255px;white-space:pre;">5m ago</div><svg style="position:absolute;left:1785.8px;top:290.5px;" width="14" height="14" viewBox="0 0 24 24" fill="none" stroke="#0a0a0a" stroke-width="2" stroke-linecap="round" stroke-linejoin="round"><path d="M20 6 9 17l-5-5"/></svg><div style="position:absolute;left:1812.30px;top:291.80px;font-size:12px;line-height:12px;font-weight:400;color:#0a0a0a;letter-spacing:-0.086px;white-space:pre;-webkit-text-stroke:0.25px #0a0a0a;">Mark as read</div><div style="position:absolute;left:1545px;top:339px;width:364px;height:127px;background:#fff;border-radius:9px;border:1px solid #e8e8ea;box-sizing:border-box;box-shadow:0 1px 2px rgba(0,0,0,0.05);"></div><div style="position:absolute;left:1561px;top:355px;width:31px;height:31px;background:#fef2f2;border-radius:7px;"></div><svg style="position:absolute;left:1569.0px;top:363.0px;" width="15" height="15" viewBox="0 0 24 24" fill="none" stroke="#ef4444" stroke-width="2" stroke-linecap="round" stroke-linejoin="round"><circle cx="12" cy="12" r="10"/><polyline points="12 6 12 12 16 14"/></svg><div style="position:absolute;left:1603.5px;top:360px;width:7.5px;height:7.5px;background:#8aa8f2;border-radius:4px;"></div><div style="position:absolute;left:1619.00px;top:356.10px;font-size:14px;line-height:14px;font-weight:400;color:#0a0a0a;letter-spacing:-0.103px;white-space:pre;-webkit-text-stroke:0.25px #0a0a0a;">Quarterly Report Due</div><div style="position:absolute;left:1603.50px;top:378.02px;font-size:13.5px;line-height:13.5px;font-weight:400;color:#737378;letter-spacing:0.076px;white-space:pre;">Q4 financial report submission deadline is in 2</div><div style="position:absolute;left:1603.50px;top:396.92px;font-size:13.5px;line-height:13.5px;font-weight:400;color:#737378;letter-spacing:0.000px;white-space:pre;">days</div><div style="position:absolute;left:1603.50px;top:431.80px;font-size:12px;line-height:12px;font-weight:400;color:#737378;letter-spacing:-0.201px;white-space:pre;">2h ago</div><svg style="position:absolute;left:1785.8px;top:430.5px;" width="14" height="14" viewBox="0 0 24 24" fill="none" stroke="#0a0a0a" stroke-width="2" stroke-linecap="round" stroke-linejoin="round"><path d="M20 6 9 17l-5-5"/></svg><div style="position:absolute;left:1812.30px;top:431.80px;font-size:12px;line-height:12px;font-weight:400;color:#0a0a0a;letter-spacing:-0.086px;white-space:pre;-webkit-text-stroke:0.25px #0a0a0a;">Mark as read</div><div style="position:absolute;left:1545px;top:479.3px;width:364px;height:108.09999999999997px;background:#fff;border-radius:9px;border:1px solid #e8e8ea;box-sizing:border-box;box-shadow:0 1px 2px rgba(0,0,0,0.05);"></div><div style="position:absolute;left:1561px;top:495.3px;width:31px;height:31px;background:#fff7ed;border-radius:7px;"></div><svg style="position:absolute;left:1569.0px;top:503.3px;" width="15" height="15" viewBox="0 0 24 24" fill="none" stroke="#f97316" stroke-width="2" stroke-linecap="round" stroke-linejoin="round"><circle cx="12" cy="12" r="10"/><line x1="12" x2="12" y1="8" y2="12"/><line x1="12" x2="12.01" y1="16" y2="16"/></svg><div style="position:absolute;left:1603.5px;top:500px;width:7.5px;height:7.5px;background:#8aa8f2;border-radius:4px;"></div><div style="position:absolute;left:1619.00px;top:496.10px;font-size:14px;line-height:14px;font-weight:400;color:#0a0a0a;letter-spacing:-0.023px;white-space:pre;-webkit-text-stroke:0.25px #0a0a0a;">Large Claim Alert</div><div style="position:absolute;left:1603.50px;top:518.12px;font-size:13.5px;line-height:13.5px;font-weight:400;color:#737378;letter-spacing:0.055px;white-space:pre;">Claim #98765 exceeds $100K threshold</div><div style="position:absolute;left:1603.50px;top:552.50px;font-size:12px;line-height:12px;font-weight:400;color:#737378;letter-spacing:-0.717px;white-space:pre;">1d ago</div><svg style="position:absolute;left:1785.8px;top:551.2px;" width="14" height="14" viewBox="0 0 24 24" fill="none" stroke="#0a0a0a" stroke-width="2" stroke-linecap="round" stroke-linejoin="round"><path d="M20 6 9 17l-5-5"/></svg><div style="position:absolute;left:1812.30px;top:552.50px;font-size:12px;line-height:12px;font-weight:400;color:#0a0a0a;letter-spacing:-0.086px;white-space:pre;-webkit-text-stroke:0.25px #0a0a0a;">Mark as read</div><div style="position:absolute;left:1545px;top:600.7px;width:364px;height:96.19999999999993px;background:#fff;border-radius:9px;border:1px solid #e8e8ea;box-sizing:border-box;box-shadow:0 1px 2px rgba(0,0,0,0.05);"></div><div style="position:absolute;left:1561px;top:616.7px;width:31px;height:31px;background:#f0fdf4;border-radius:7px;"></div><svg style="position:absolute;left:1569.0px;top:624.7px;" width="15" height="15" viewBox="0 0 24 24" fill="none" stroke="#22c55e" stroke-width="2" stroke-linecap="round" stroke-linejoin="round"><path d="M15 2H6a2 2 0 0 0-2 2v16a2 2 0 0 0 2 2h12a2 2 0 0 0 2-2V7Z"/><path d="M14 2v4a2 2 0 0 0 2 2h4"/><path d="M10 9H8"/><path d="M16 13H8"/><path d="M16 17H8"/></svg><div style="position:absolute;left:1603.50px;top:616.60px;font-size:14px;line-height:14px;font-weight:400;color:#0a0a0a;letter-spacing:0.016px;white-space:pre;-webkit-text-stroke:0.25px #0a0a0a;">Monthly Report Available</div><div style="position:absolute;left:1603.50px;top:639.52px;font-size:13.5px;line-height:13.5px;font-weight:400;color:#737378;letter-spacing:0.070px;white-space:pre;">December loss ratio report is ready for review</div><div style="position:absolute;left:1603.50px;top:668.40px;font-size:12px;line-height:12px;font-weight:400;color:#737378;letter-spacing:-0.151px;white-space:pre;">2d ago</div><div style="position:absolute;left:1545px;top:710.1px;width:364px;height:97.10000000000002px;background:#fff;border-radius:9px;border:1px solid #e8e8ea;box-sizing:border-box;box-shadow:0 1px 2px rgba(0,0,0,0.05);"></div><div style="position:absolute;left:1561px;top:726.1px;width:31px;height:31px;background:#faf5ff;border-radius:7px;"></div><svg style="position:absolute;left:1569.0px;top:734.1px;" width="15" height="15" viewBox="0 0 24 24" fill="none" stroke="#a855f7" stroke-width="2" stroke-linecap="round" stroke-linejoin="round"><circle cx="12" cy="12" r="10"/><path d="M12 16v-4"/><path d="M12 8h.01"/></svg><div style="position:absolute;left:1603.50px;top:726.90px;font-size:14px;line-height:14px;font-weight:400;color:#0a0a0a;letter-spacing:-0.078px;white-space:pre;-webkit-text-stroke:0.25px #0a0a0a;">System Update</div><div style="position:absolute;left:1603.50px;top:748.73px;font-size:13.5px;line-height:13.5px;font-weight:400;color:#737378;letter-spacing:0.144px;white-space:pre;">New features added to the claims module</div><div style="position:absolute;left:1603.50px;top:778.00px;font-size:12px;line-height:12px;font-weight:400;color:#737378;letter-spacing:-0.234px;white-space:pre;">3d ago</div><div style="position:absolute;left:1803.25px;top:1479.5px;width:134.25px;height:26.75px;background:#000;border-radius:6px;"></div><div style="position:absolute;left:1815.75px;top:1486.80px;font-size:12px;line-height:12px;font-weight:400;color:#bdbdbd;letter-spacing:-0.340px;white-space:pre;">Edit with</div><svg style="position:absolute;left:1862.5px;top:1486px" width="11" height="13" viewBox="0 0 11 13"><defs><linearGradient id="lv" x1="0" y1="0" x2="0" y2="1"><stop offset="0" stop-color="#fe7a3d"/><stop offset="0.5" stop-color="#f0508c"/><stop offset="1" stop-color="#7a5cf5"/></linearGradient></defs><path d="M2.8 0 C4.4 0 5.6 1.3 5.6 2.9 V4.2 C6.2 3.6 7 3.3 7.8 3.3 C9.6 3.3 11 4.7 11 6.5 V13 H1.4 C0.6 13 0 12.4 0 11.6 V2.8 C0 1.3 1.2 0 2.8 0 Z" fill="url(#lv)"/></svg><div style="position:absolute;left:1875.00px;top:1485.60px;font-size:14px;line-height:14px;font-weight:700;color:#fff;letter-spacing:-1.129px;white-space:pre;">Lovable</div><svg style="position:absolute;left:1924.75px;top:1484.75px;" width="8" height="8" viewBox="0 0 24 24" fill="none" stroke="#ddd" stroke-width="2.5" stroke-linecap="round" stroke-linejoin="round"><path d="M18 6 6 18"/><path d="m6 6 12 12"/></svg>
</div></body></html>
